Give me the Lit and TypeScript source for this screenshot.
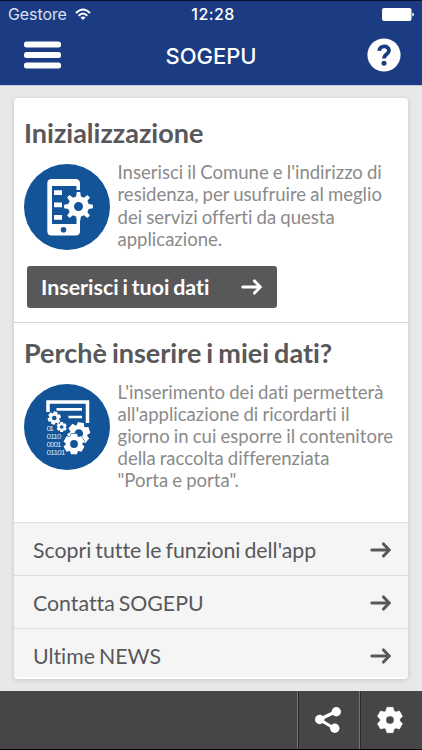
import { LitElement, html, css } from "lit";
import { customElement, property } from "lit/decorators.js";

/** Outline of a gear with trapezoid teeth, plus a round hole (even-odd fill). */
function gear(cx: number, cy: number, teeth: number, outer: number, inner: number, hole: number, rootHalf: number, tipHalf: number, turn = 0): string {
  const pts: string[] = [];
  const step = (Math.PI * 2) / teeth;
  const at = (r: number, a: number) => `${(cx + r * Math.cos(a)).toFixed(2)} ${(cy + r * Math.sin(a)).toFixed(2)}`;
  for (let i = 0; i < teeth; i++) {
    const a = i * step - Math.PI / 2 + turn;
    const root = Math.asin(rootHalf / inner);
    const tip = Math.asin(tipHalf / outer);
    pts.push(`${i === 0 ? "M" : `A${inner} ${inner} 0 0 1 `}${at(inner, a - root)}`);
    pts.push(`L${at(outer, a - tip)}`, `L${at(outer, a + tip)}`, `L${at(inner, a + root)}`);
  }
  const last = -Math.PI / 2 + turn - Math.asin(rootHalf / inner);
  pts.push(`A${inner} ${inner} 0 0 1 ${at(inner, last)}Z`);
  if (hole > 0) pts.push(`M${cx - hole} ${cy}a${hole} ${hole} 0 1 0 ${hole * 2} 0a${hole} ${hole} 0 1 0 ${-hole * 2} 0Z`);
  return pts.join("");
}

const arrow = html`<svg class="arrow" width="22" height="16" viewBox="0 0 22 16" fill="none" stroke="currentColor" stroke-width="3" stroke-linecap="round" stroke-linejoin="miter">
  <path d="M1.800 8H18.500" /><path d="M13.500 1.900L19.200 8L13.500 14.100" />
</svg>`;

const phoneIcon = html`<svg class="badge" width="86" height="86" viewBox="0 0 86 86">
  <circle cx="43" cy="43" r="43" fill="#125497" />
  <path fill="#fff" fill-rule="evenodd" d="M27.500 15H51.500Q56 15 56 19.500V26H52.500V22H28V60H52.500V56.500H56V67Q56 71.500 51.500 71.500H27.500Q23.300 71.500 23.300 67V19.500Q23.300 15 27.500 15Z" />
  <circle cx="39.500" cy="65.800" r="2.800" fill="#125497" />
  <path fill="#fff" d="M30 26.200h8v4.700h-8zM30 38.500h8v4.700h-8zM30 51h8v4.700h-8z" />
  <path fill="#fff" fill-rule="evenodd" d=${gear(54.5, 42.5, 8, 14.5, 10.4, 4.5, 2.4, 1.7)} />
</svg>`;

const dataIcon = html`<svg class="badge" width="86" height="86" viewBox="0 0 86 86">
  <circle cx="43" cy="43" r="43" fill="#125497" />
  <path d="M24 28V18H63.500V39" fill="none" stroke="#fff" stroke-width="3.500" />
  <path d="M32.500 25.300H58M44.500 33H58" stroke="#fff" stroke-width="2.700" />
  <g fill="#fff" fill-rule="evenodd">
    <path d=${gear(30.3, 34, 6, 6.8, 4.8, 2.3, 2.3, 1.8, 0.2)} />
    <path d=${gear(37.7, 43, 6, 5.2, 3.7, 1.8, 1.8, 1.4)} />
    <path d=${gear(54.8, 49.5, 6, 11.6, 8.6, 4.3, 3.9, 3.1, 0.2)} />
  </g>
  <path d=${gear(50, 60, 6, 10.8, 8.3, 0, 3.8, 3)} fill="#fff" stroke="#125497" stroke-width="1" paint-order="stroke" />
  <circle cx="50" cy="60" r="3.900" fill="#125497" />
  <g class="bits" fill="#dbe8f5">
    <text x="22.500" y="47" textLength="7.500">01</text>
    <text x="22.500" y="54.700" textLength="15">0110</text>
    <text x="22.500" y="62.800" textLength="15">0001</text>
    <text x="22.500" y="70.800" textLength="19">01101</text>
  </g>
</svg>`;

@customElement("info-section")
class InfoSection extends LitElement {
  @property() heading = "";
  @property({ attribute: false }) lines: string[] = [];
  @property({ attribute: false }) icon: unknown;

  static styles = css`
    :host { display: block; padding: 19px 0 0 10.500px; }
    h2 { margin: 0; font: 700 27px/32px Lato, sans-serif; font-variant-ligatures: none; word-spacing: -1.500px; color: #58585a; white-space: nowrap; }
    .body { display: flex; gap: 8px; padding-top: 12px; }
    .badge { flex: none; display: block; margin-top: 3px; margin-left: -0.500px; }
    .bits { font: 8px "Liberation Sans", sans-serif; }
    p { margin: 0.400px 0 0; font: 400 18.550px/22.100px Lato, sans-serif; font-variant-ligatures: none; word-spacing: -0.600px; color: #8a8a8a; white-space: nowrap; }
    .line { display: block; }
  `;

  render() {
    return html`
      <h2>${this.heading}</h2>
      <div class="body">
        ${this.icon}
        <p>${this.lines.map((l) => html`<span class="line">${l}</span>`)}</p>
      </div>
      <slot></slot>
    `;
  }
}

@customElement("app-root")
class AppRoot extends LitElement {
  static styles = css`
    :host { display: flex; flex-direction: column; height: 750px; box-sizing: border-box; background: #e8e8e9; border-top: 1px solid #0b1030; overflow: hidden; font-family: Lato, sans-serif; font-variant-ligatures: none; }
    header { flex: none; height: 84px; background: #1b3b82; color: #fff; box-shadow: 0 1px 0 #c3cbe0; }
    .status { height: 27px; display: grid; grid-template-columns: 1fr auto 1fr; align-items: center; padding: 0 8px; font: 400 16px/27px Inter, sans-serif; }
    .carrier { display: flex; align-items: center; gap: 8px; color: #d8e0f3; letter-spacing: -0.100px; }
    .clock { font-weight: 500; letter-spacing: 0.400px; margin-left: 4px; }
    .battery { justify-self: end; }
    .nav { height: 54px; display: grid; grid-template-columns: 1fr auto 1fr; align-items: center; padding: 0 21px 0 24px; }
    h1 { margin: 0 3px 0 0; font: 500 22px/54px Inter, sans-serif; letter-spacing: -0.050px; position: relative; top: 1px; }
    .help { justify-self: end; }
    svg { display: block; }
    main { flex: 1; padding: 13px 14px 12px 13.500px; }
    .card { height: 581px; background: #fff; border-radius: 4px; box-shadow: 0 1px 5px rgba(0, 0, 0, 0.14); overflow: hidden; display: flex; flex-direction: column; }
    .first { height: 205px; border-bottom: 1px solid #d4d4d6; }
    .second { flex: 1; padding-top: 13.600px; }
    .cta { display: flex; align-items: center; justify-content: space-between; box-sizing: border-box; width: 250px; height: 42px; margin: 15.600px 0 0 2.500px; padding: 0 13.500px 0 14.500px; border: 0; border-radius: 3px; background: #58585a; color: #fff; font: 700 21.400px/42px Lato, sans-serif; word-spacing: -1.400px; font-variant-ligatures: none; }
    .cta .arrow { margin-top: 1px; }
    nav { padding-bottom: 2px; }
    .row { box-sizing: border-box; display: flex; align-items: flex-start; justify-content: space-between; height: 53px; padding: 0 16px 0 19.500px; border-top: 1px solid #dededf; background: #f5f5f6; color: #58585a; font-size: 21.300px; line-height: 54.500px; word-spacing: -1.500px; }
    .row:last-child { height: 49px; }
    .row .arrow { margin-top: 19.300px; }
    footer { flex: none; height: 58px; display: flex; justify-content: flex-end; background: #464648; border-bottom: 1px solid #000; box-sizing: content-box; }
    .tool { box-sizing: border-box; display: flex; align-items: center; justify-content: center; border-left: 1px solid #747476; box-shadow: inset 1px 0 0 #2b2b2d; }
    .share { width: 62px; padding-right: 1px; }
    .settings { width: 63px; padding-right: 2px; }
  `;

  render() {
    return html`
      <header>
        <div class="status">
          <span class="carrier"><span>Gestore</span>
            <svg width="16" height="13" viewBox="0 0 16 13" fill="none" stroke="#fff" stroke-width="2">
              <path d="M1 5Q8 -2 15 5M3.700 7.700Q8 3.400 12.300 7.700" /><path d="M8 12L5.500 9.500Q8 7.500 10.500 9.500Z" fill="#fff" stroke="none" />
            </svg>
          </span>
          <span class="clock">12:28</span>
          <svg class="battery" width="32" height="13" viewBox="0 0 32 13" fill="#fff"><rect width="29.500" height="13" rx="2" /><path d="M30.300 4.500Q32 5 32 6.500T30.300 8.500Z" /></svg>
        </div>
        <div class="nav">
          <svg width="38" height="28" viewBox="0 0 38 28" fill="#fff"><rect y="0.500" width="37" height="6" rx="2.500" /><rect y="11" width="37" height="6" rx="2.500" /><rect y="21.500" width="37" height="6" rx="2.500" /></svg>
          <h1>SOGEPU</h1>
          <svg class="help" width="34" height="34" viewBox="0 0 34 34"><circle cx="17" cy="17" r="16.600" fill="#fff" />
            <path d="M12.200 12.800C12.500 6.800 22 7 22 12.500C22 16.500 17 16 17 20.500" fill="none" stroke="#1b3b82" stroke-width="3.800" /><circle cx="17" cy="25.200" r="2.500" fill="#1b3b82" /></svg>
        </div>
      </header>
      <main>
        <div class="card">
          <info-section class="first" heading="Inizializzazione" .icon=${phoneIcon}
            .lines=${["Inserisci il Comune e l'indirizzo di", "residenza, per usufruire al meglio", "dei servizi offerti da questa", "applicazione."]}>
            <button class="cta"><span>Inserisci i tuoi dati</span>${arrow}</button>
          </info-section>
          <info-section class="second" heading="Perchè inserire i miei dati?" .icon=${dataIcon}
            .lines=${["L'inserimento dei dati permetterà", "all'applicazione di ricordarti il", "giorno in cui esporre il contenitore", "della raccolta differenziata", "\"Porta e porta\"."]}></info-section>
          <nav>
            ${["Scopri tutte le funzioni dell'app", "Contatta SOGEPU", "Ultime NEWS"].map((t) => html`<div class="row"><span>${t}</span>${arrow}</div>`)}
          </nav>
        </div>
      </main>
      <footer>
        <div class="tool share">
          <svg width="26" height="26" viewBox="0 0 26 26"><path d="M20.500 4.800L4.500 12.500L19.500 21.500" fill="none" stroke="#fff" stroke-width="3.200" /><g fill="#fff"><circle cx="21.300" cy="4.700" r="4.700" /><circle cx="4.700" cy="12.500" r="4.700" /><circle cx="19.800" cy="21.300" r="4.700" /></g></svg>
        </div>
        <div class="tool settings">
          <svg width="28" height="28" viewBox="0 0 28 28"><path d=${gear(14, 14, 6, 13, 9.8, 4.1, 4.1, 3)} fill="#fff" stroke="#fff" stroke-width="0.600" stroke-linejoin="round" fill-rule="evenodd" /></svg>
        </div>
      </footer>
    `;
  }
}
